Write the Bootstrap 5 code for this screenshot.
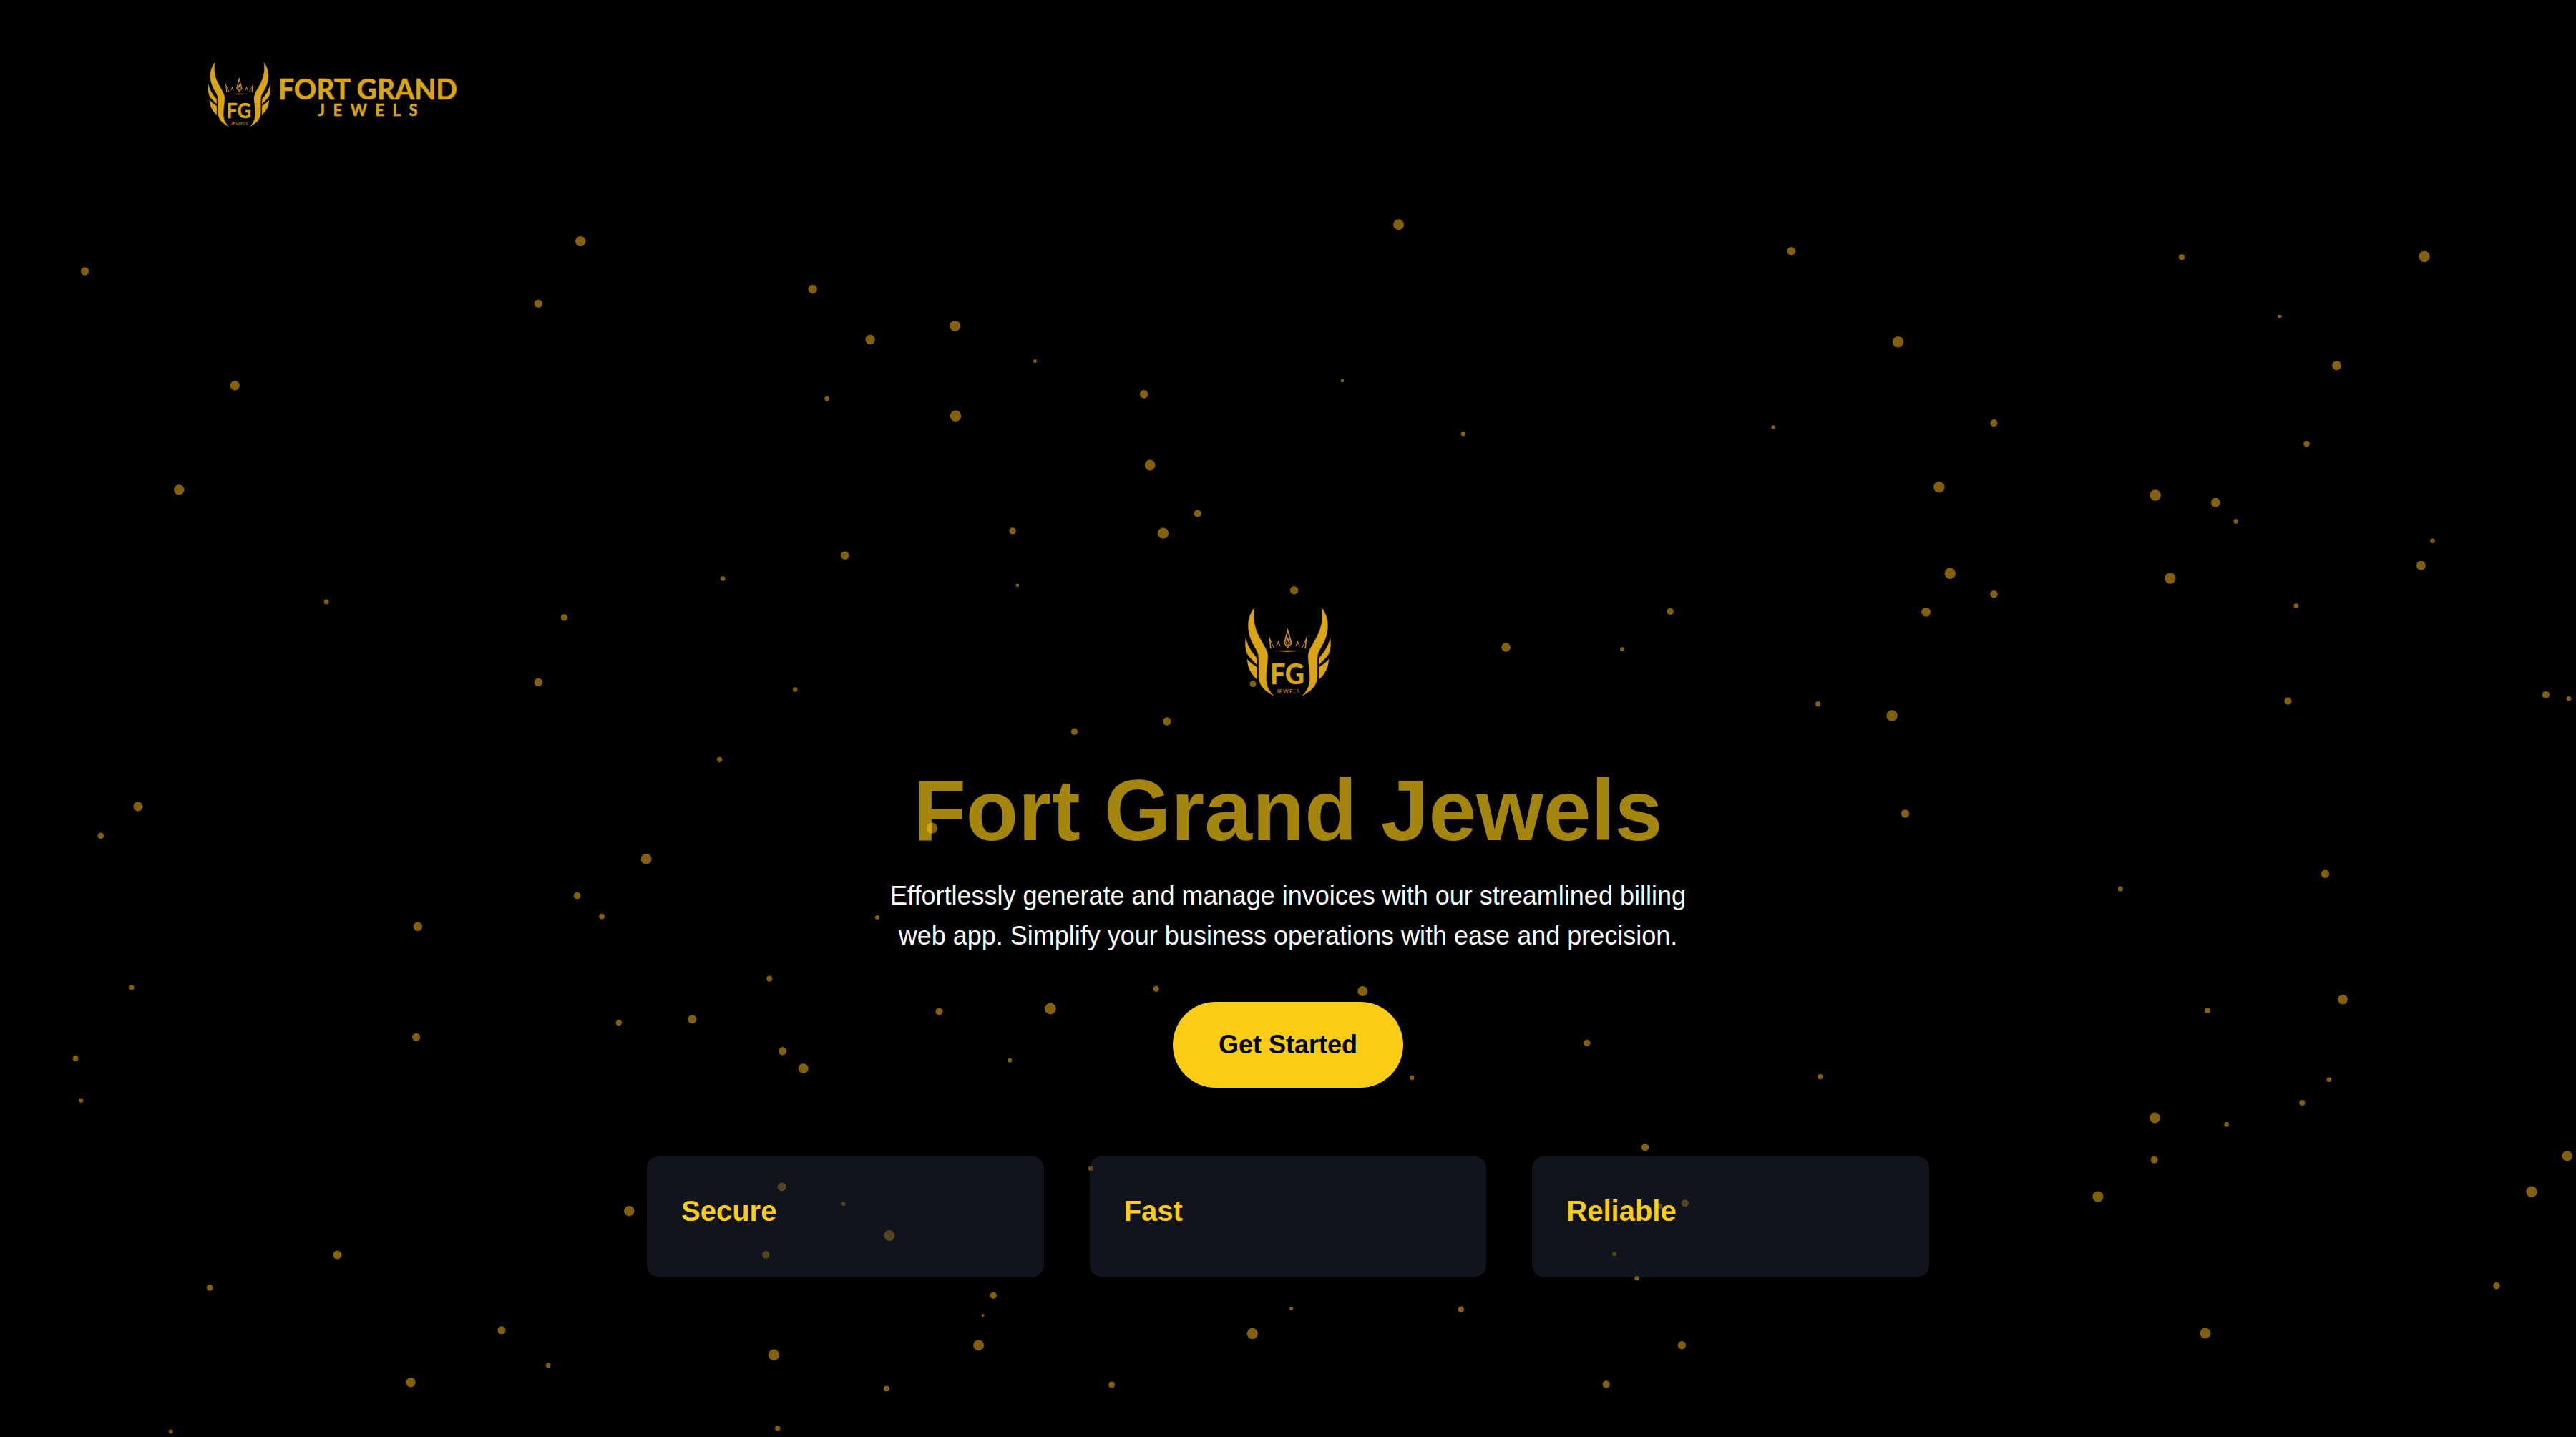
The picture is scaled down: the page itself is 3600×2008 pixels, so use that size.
<!DOCTYPE html>
<html lang="en">
<head>
<meta charset="utf-8">
<meta name="viewport" content="width=device-width, initial-scale=1">
<title>Fort Grand Jewels</title>
<link href="https://cdn.jsdelivr.net/npm/bootstrap@5.3.0/dist/css/bootstrap.min.css" rel="stylesheet">
<style>
  body { background: #000; color: #fff; font-family: "Liberation Sans", Arial, sans-serif; width: 3600px; height: 2008px; overflow: hidden; }
  .particles { position: absolute; inset: 0; width: 3600px; height: 2008px; fill: #84600c; z-index: 0; }
  .page { z-index: 1; height: 2008px; }
  .topbar { padding: 70px 270px 0; height: 260px; }
  .brand-logo { width: 390px; height: 120px; }
  .logo-word { font-family: Lato, "Open Sans", sans-serif; font-weight: 700; }
  .hero { padding-top: 588px; }
  .hero-logo { width: 122px; height: 126px; margin-bottom: 98px; }
  .hero-title { font-size: 120px; line-height: 120px; font-weight: 700; color: #facc15; opacity: .656; margin-bottom: 32px; }
  .hero-text { font-size: 36px; line-height: 56px; width: 1152px; margin-bottom: 64px; }
  .btn-start { --bs-btn-bg: #facc15; --bs-btn-color: #000; --bs-btn-border-width: 0; font-size: 36px; line-height: 56px; font-weight: 700; padding: 32px 64px; margin-bottom: 96px; }
  .features { width: 1792px; display: grid; grid-template-columns: repeat(3, 1fr); gap: 64px; }
  .feature { background: rgba(34, 39, 56, .5); border-radius: 16px; padding: 48px; height: 168px; }
  .feature h3 { font-size: 40px; line-height: 56px; font-weight: 700; color: #facc15; margin: 0; }
</style>
<script src="https://cdn.jsdelivr.net/npm/bootstrap@5.3.0/dist/js/bootstrap.bundle.min.js"></script>
</head>
<body>
<svg class="particles" id="particles" viewBox="0 0 3600 2008" aria-hidden="true"></svg>

<svg width="0" height="0" class="position-absolute" aria-hidden="true">
  <defs>
    <linearGradient id="bar" x1="0" x2="1"><stop offset="0" stop-color="#6b3a06"/><stop offset=".5" stop-color="#f0b84a"/><stop offset="1" stop-color="#6b3a06"/></linearGradient>
    <g id="wing">
      <path d="M102 148C85 170 76 195 76 225C77 262 88 288 106 318C117 336 120 348 120 372V430C120 466 134 484 152 498Q166 508 183 518C162 494 151 476 152 440C153 400 161 362 158 344C154 322 136 298 120 266C103 232 95 192 102 148Z"/>
      <path d="M66 275C62 300 64 322 72 342C80 357 98 370 113 388V360C94 336 76 318 66 275Z"/>
      <path d="M72 364C74 402 88 426 113 449V398C98 388 84 379 72 364Z"/>
    </g>
    <g id="spikes">
      <path d="M162 262Q166 292 168 320L173 320L170 290L183 319L186 314L177 300Z"/>
      <path d="M192 311L202 286L212 311L207 308L202 297L197 308Z"/>
    </g>
    <g id="mark">
      <g fill="#d9a516" stroke="#b5720a" stroke-width="1.2">
        <use href="#wing"/><use href="#wing" transform="matrix(-1 0 0 1 486 0)"/>
      </g>
      <g fill="#c98a1c">
        <use href="#spikes"/><use href="#spikes" transform="matrix(-1 0 0 1 486 0)"/>
        <path fill-rule="evenodd" d="M242 233L260 298L242 320L225 298ZM242 253L231 298L242 314L254 298Z"/>
        <path fill-rule="evenodd" d="M242 271L252 298L242 312L233 298ZM242 286L238 298L242 304L247 298Z"/>
      </g>
      <path d="M182 328Q242 326 301 328Q242 339 182 328Z" fill="url(#bar)"/>
      <text class="logo-word" x="169" y="468" font-size="118" textLength="142" lengthAdjust="spacingAndGlyphs" fill="#d9a516" stroke="#d9a516" stroke-width="2">FG</text>
      <text class="logo-word" x="194" y="507" font-size="23" textLength="98" fill="#a8741a">JEWELS</text>
    </g>
  </defs>
</svg>

<div class="page position-relative d-flex flex-column">
  <header class="topbar">
    <a href="#" class="d-inline-block" aria-label="Fort Grand Jewels">
      <svg class="brand-logo d-block" viewBox="0 0 390 120">
        <use href="#mark" transform="translate(5.3 -18.9) scale(.2435)"/>
        <g class="logo-word" fill="#d9a516" stroke="#d9a516" stroke-width=".6">
          <text x="119" y="68.7" font-size="39.3" textLength="250" lengthAdjust="spacingAndGlyphs">FORT GRAND</text>
          <text x="174.5" y="92.3" font-size="22" textLength="139">JEWELS</text>
        </g>
      </svg>
    </a>
  </header>

  <main class="hero d-flex flex-column align-items-center text-center">
    <svg class="hero-logo" viewBox="60 145 366 378"><use href="#mark"/></svg>
    <h1 class="hero-title">Fort Grand Jewels</h1>
    <p class="hero-text">Effortlessly generate and manage invoices with our streamlined billing web app. Simplify your business operations with ease and precision.</p>
    <a href="#" class="btn btn-start rounded-pill">Get Started</a>
    <section class="features text-start">
      <div class="feature"><h3>Secure</h3></div>
      <div class="feature"><h3>Fast</h3></div>
      <div class="feature"><h3>Reliable</h3></div>
    </section>
  </main>
</div>

<script>
  // Gold dust: x, y, radius
  const dust = [
    [118.6,379,6],[811.2,337.1,7.5],[752.3,424.1,6],[1135.7,404,6.5],[328.3,538.8,7],[1155.6,557.1,3.7],[250.3,684.4,7.5],[456.1,841,3.7],[1010.2,808.5,3.5],[788.3,862.9,5],[1180.9,776.3,6],
    [1954.6,313.8,7.8],[1334.7,455.4,7.8],[1216.1,474.5,7],[1446.4,504.5,2.8],[1875.8,532.1,2.6],[1598.7,550.9,6.2],[1335.5,581.2,8],[2044.9,606.2,3.5],[1607.1,650,7.7],[1673.7,717.4,5.5],[1415.1,741.9,5],[1625.5,745.1,8],[1421.9,817.8,2.7],[1808.6,824.8,6],[2104.6,904.4,6.6],[2334.2,854.4,5],[2266.8,907.1,3.2],
    [2503.3,350.9,6.2],[3049,359.4,4.4],[3388,358.5,8],[3186,442,2.9],[2652.5,477.7,8],[3265.6,510.7,6.8],[2478.1,596.9,2.9],[2786.5,591.1,5.3],[3223.5,620.1,4.6],[2709.9,680.8,8],[3012.2,692,8],[3096.4,702.2,6.7],[3124.7,728.6,3.6],[3399.5,755.8,3.6],[3383.4,790.2,6.7],[2725.3,801.3,8],[3032.9,808,8],[2786.5,830.3,5.5],[2691.6,855.3,6.7],[3208.9,846.4,3.7],
    [752.3,953.4,6],[1111.2,963.5,3.5],[1005.6,1061.3,3.9],[192.9,1126.8,6.9],[140.8,1167.9,4.7],[903.1,1200.3,7.8],[806.6,1251.6,5.2],[841.1,1280.6,4.2],[583.9,1294.8,6.5],[183.7,1379.8,4.1],[1075.2,1367.6,4.5],[864.8,1429,4.6],[967.3,1424.3,6.3],[581.6,1449.3,5.9],[1093.6,1468.8,6],[1122.7,1493.1,7.3],[105.6,1479,4.2],[113.3,1537.7,3.4],[1092.7,1658.5,6.4],[1178.7,1682.3,3],[879.3,1692.2,7.6],[1070.3,1753.3,5.5],[471.4,1753.6,6.3],[293.1,1799.4,4.6],[701,1858.8,5.9],[766.1,1908.1,3.6],[1081.4,1893.2,8],[574,1931.7,7],[238.8,2000.5,3.2],[1086.7,1995.8,4],
    [1751,955.6,4.8],[1501.5,1022.2,5],[1630.9,1008,6],[1302.6,1157.1,7.8],[1226,1282,3.3],[1615.6,1381.8,4.5],[1904.3,1385,7.3],[1312.5,1413.5,5.3],[1467.9,1409.5,8.2],[1411.2,1481.7,3.3],[2217.8,1457.4,5],[1973.3,1505.9,3.4],[1524.5,1632.8,3.7],[1242.9,1726.6,7.8],[2299,1603.1,5.5],[2354.8,1681.4,5.4],[2319.6,1685.4,4],[2256.1,1752.2,3.3],[2287.5,1786,3.6],[1388.3,1810.3,5],[1373.7,1837.9,2.3],[1367.6,1879.8,7.8],[1804.6,1828.5,2.9],[1750.3,1863.5,8],[2041.8,1829.8,4.6],[2350.3,1879.8,6],[1239,1940.5,4.4],[1553.6,1935,4.8],[2244.7,1934.4,5.5],
    [2540.8,983.7,4],[2644.1,999.9,8],[3197.5,979.7,5.4],[3557.9,970.9,5.3],[3590,976.3,3.6],[2662.5,1136.9,6],[3249.5,1221.2,6],[2963.3,1242.1,3.8],[3274,1396.7,7.2],[3085,1412.2,4.3],[2543.9,1504.6,4],[3254.8,1508.7,3.6],[3217.3,1541,4.3],[3011.5,1562,7.7],[3111.7,1571.4,3.7],[3010.7,1620.7,5.3],[3587.7,1615.3,7.5],[3538,1665.2,8],[2931.9,1671.9,7.8],[3489,1796.7,5],[3081.9,1862.9,7.7]
  ];
  const layer = document.getElementById('particles');
  for (const [x, y, r] of dust) {
    const c = document.createElementNS('http://www.w3.org/2000/svg', 'circle');
    c.setAttribute('cx', x);
    c.setAttribute('cy', y);
    c.setAttribute('r', Math.max(r - .3, 1.5));
    layer.appendChild(c);
  }
</script>
</body>
</html>
